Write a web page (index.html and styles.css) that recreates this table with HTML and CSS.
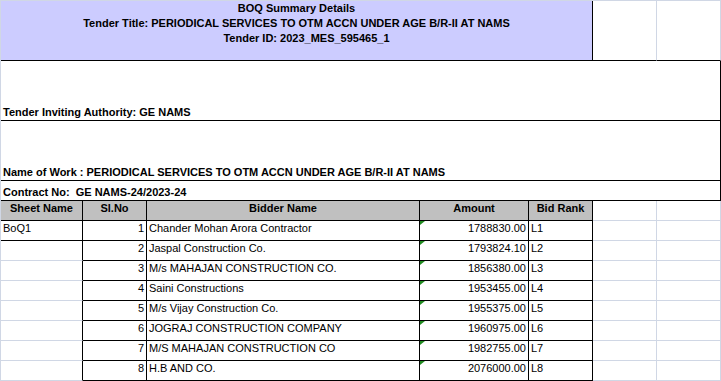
FILE: index.html
```html
<!DOCTYPE html>
<html lang="en">
<head>
<meta charset="utf-8">
<title>BOQ Summary Details</title>
<link rel="stylesheet" href="styles.css">
</head>
<body>
<div class="sheet">
  <div class="c title span5 br bb">
    <div class="tline">BOQ Summary Details</div>
    <div class="tline">Tender Title: PERIODICAL SERVICES TO OTM ACCN UNDER AGE B/R-II AT NAMS</div>
    <div class="tline shift">Tender ID: 2023_MES_595465_1</div>
  </div>
  <div class="c bb"></div>
  <div class="c bb"></div>

  <div class="c span7 br bb bottom bold">Tender Inviting Authority: GE NAMS</div>
  <div class="c span7 br bb bottom bold">Name of Work : PERIODICAL SERVICES TO OTM ACCN UNDER AGE B/R-II AT NAMS</div>
  <div class="c span7 br bb bottom bold pre">Contract No:  GE NAMS-24/2023-24</div>

  <div class="c head br bb">Sheet Name</div>
  <div class="c head br bb">Sl.No</div>
  <div class="c head br bb">Bidder Name</div>
  <div class="c head br bb">Amount</div>
  <div class="c head br bb">Bid Rank</div>
  <div class="c"></div>
  <div class="c"></div>

  <div class="c br bb">BoQ1</div>
  <div class="c br bb right">1</div>
  <div class="c br bb">Chander Mohan Arora Contractor</div>
  <div class="c br bb right num">1788830.00</div>
  <div class="c br bb">L1</div>
  <div class="c"></div>
  <div class="c"></div>

  <div class="c br"></div>
  <div class="c br bb right">2</div>
  <div class="c br bb">Jaspal Construction Co.</div>
  <div class="c br bb right num">1793824.10</div>
  <div class="c br bb">L2</div>
  <div class="c"></div>
  <div class="c"></div>

  <div class="c br"></div>
  <div class="c br bb right">3</div>
  <div class="c br bb">M/s MAHAJAN CONSTRUCTION CO.</div>
  <div class="c br bb right num">1856380.00</div>
  <div class="c br bb">L3</div>
  <div class="c"></div>
  <div class="c"></div>

  <div class="c br"></div>
  <div class="c br bb right">4</div>
  <div class="c br bb">Saini Constructions</div>
  <div class="c br bb right num">1953455.00</div>
  <div class="c br bb">L4</div>
  <div class="c"></div>
  <div class="c"></div>

  <div class="c br"></div>
  <div class="c br bb right">5</div>
  <div class="c br bb">M/s Vijay Construction Co.</div>
  <div class="c br bb right num">1955375.00</div>
  <div class="c br bb">L5</div>
  <div class="c"></div>
  <div class="c"></div>

  <div class="c br"></div>
  <div class="c br bb right">6</div>
  <div class="c br bb">JOGRAJ CONSTRUCTION COMPANY</div>
  <div class="c br bb right num">1960975.00</div>
  <div class="c br bb">L6</div>
  <div class="c"></div>
  <div class="c"></div>

  <div class="c br"></div>
  <div class="c br bb right">7</div>
  <div class="c br bb">M/S MAHAJAN CONSTRUCTION CO</div>
  <div class="c br bb right num">1982755.00</div>
  <div class="c br bb">L7</div>
  <div class="c"></div>
  <div class="c"></div>

  <div class="c br"></div>
  <div class="c br bb right">8</div>
  <div class="c br bb">H.B AND CO.</div>
  <div class="c br bb right num">2076000.00</div>
  <div class="c br bb">L8</div>
  <div class="c"></div>
  <div class="c"></div>
</div>
</body>
</html>
```
FILE: styles.css
```css
html, body {
  margin: 0;
  padding: 0;
  background: #ffffff;
}

.sheet {
  display: grid;
  grid-template-columns: 82px 64px 273px 109px 64px 64px 64px;
  grid-template-rows: 60px 60px 60px repeat(10, 20px);
  border-top: 1px solid #d0d7e5;
  border-left: 1px solid #d0d7e5;
  width: 720px;
  font-family: "Liberation Sans", Arial, sans-serif;
  font-size: 11px;
  line-height: 13px;
  color: #000;
}

.c {
  box-sizing: border-box;
  border-right: 1px solid #d0d7e5;
  border-bottom: 1px solid #d0d7e5;
  padding: 1px 2px 0 2px;
  white-space: nowrap;
  overflow: hidden;
  display: flex;
  align-items: flex-start;
  min-width: 0;
}

.br { border-right-color: #000; }
.bb { border-bottom-color: #000; }

.span5 { grid-column: span 5; }
.span7 { grid-column: span 7; }

.title {
  background: #ccccff;
  flex-direction: column;
  align-items: center;
  padding: 0;
  font-weight: bold;
  line-height: 15px;
}

.tline { text-align: center; }
.shift { padding-left: 20px; }

.bold { font-weight: bold; }
.pre { white-space: pre; }

.bottom {
  align-items: flex-end;
  padding: 0 2px 1px 2px;
}

.head {
  background: #c0c0c0;
  font-weight: bold;
  justify-content: center;
}

.right { justify-content: flex-end; }

.num { position: relative; }
.num::before {
  content: "";
  position: absolute;
  left: 0;
  top: 0;
  width: 0;
  height: 0;
  border-top: 4px solid #1f8a1f;
  border-right: 5px solid transparent;
}
```
